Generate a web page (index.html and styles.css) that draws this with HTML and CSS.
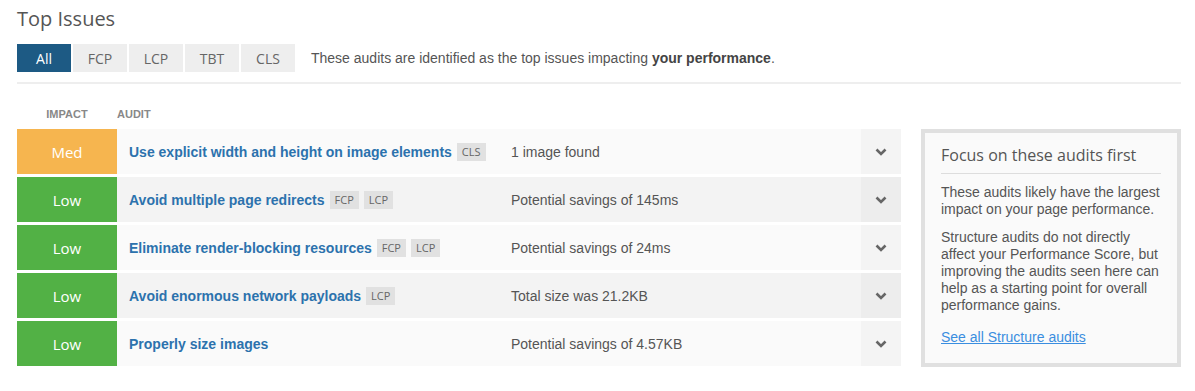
FILE: index.html
```html
<!DOCTYPE html>
<html lang="en">
<head>
    <meta charset="UTF-8">
    <meta name="viewport" content="width=device-width, initial-scale=1.0">
    <title>Top Issues</title>
    <link rel="stylesheet" href="styles.css">
</head>
<body>
    <div class="container">
        <h2 class="title">Top Issues</h2>

        <div class="filter-bar">
            <div class="tabs">
                <button class="tab active">All</button>
                <button class="tab">FCP</button>
                <button class="tab">LCP</button>
                <button class="tab">TBT</button>
                <button class="tab">CLS</button>
            </div>
            <p class="filter-note">These audits are identified as the top issues impacting <strong>your performance</strong>.</p>
        </div>

        <div class="layout">
            <div class="audits">
                <div class="audits-head">
                    <span class="col-impact">Impact</span>
                    <span class="col-audit">Audit</span>
                </div>

                <div class="audit-row">
                    <div class="impact impact-med">Med</div>
                    <div class="audit-name">
                        <a href="#">Use explicit width and height on image elements</a>
                        <span class="tag">CLS</span>
                    </div>
                    <div class="audit-desc">1 image found</div>
                    <div class="toggle"><svg width="12" height="8" viewBox="0 0 12 8"><polyline points="1.5,1.5 6,6 10.5,1.5" fill="none" stroke="#666" stroke-width="2.6"/></svg></div>
                </div>

                <div class="audit-row">
                    <div class="impact impact-low">Low</div>
                    <div class="audit-name">
                        <a href="#">Avoid multiple page redirects</a>
                        <span class="tag">FCP</span>
                        <span class="tag">LCP</span>
                    </div>
                    <div class="audit-desc">Potential savings of 145ms</div>
                    <div class="toggle"><svg width="12" height="8" viewBox="0 0 12 8"><polyline points="1.5,1.5 6,6 10.5,1.5" fill="none" stroke="#666" stroke-width="2.6"/></svg></div>
                </div>

                <div class="audit-row">
                    <div class="impact impact-low">Low</div>
                    <div class="audit-name">
                        <a href="#">Eliminate render-blocking resources</a>
                        <span class="tag">FCP</span>
                        <span class="tag">LCP</span>
                    </div>
                    <div class="audit-desc">Potential savings of 24ms</div>
                    <div class="toggle"><svg width="12" height="8" viewBox="0 0 12 8"><polyline points="1.5,1.5 6,6 10.5,1.5" fill="none" stroke="#666" stroke-width="2.6"/></svg></div>
                </div>

                <div class="audit-row">
                    <div class="impact impact-low">Low</div>
                    <div class="audit-name">
                        <a href="#">Avoid enormous network payloads</a>
                        <span class="tag">LCP</span>
                    </div>
                    <div class="audit-desc">Total size was 21.2KB</div>
                    <div class="toggle"><svg width="12" height="8" viewBox="0 0 12 8"><polyline points="1.5,1.5 6,6 10.5,1.5" fill="none" stroke="#666" stroke-width="2.6"/></svg></div>
                </div>

                <div class="audit-row">
                    <div class="impact impact-low">Low</div>
                    <div class="audit-name">
                        <a href="#">Properly size images</a>
                    </div>
                    <div class="audit-desc">Potential savings of 4.57KB</div>
                    <div class="toggle"><svg width="12" height="8" viewBox="0 0 12 8"><polyline points="1.5,1.5 6,6 10.5,1.5" fill="none" stroke="#666" stroke-width="2.6"/></svg></div>
                </div>
            </div>

            <aside class="focus-box">
                <h3>Focus on these audits first</h3>
                <p>These audits likely have the largest impact on your page performance.</p>
                <p>Structure audits do not directly affect your Performance Score, but improving the audits seen here can help as a starting point for overall performance gains.</p>
                <a href="#" class="focus-link">See all Structure audits</a>
            </aside>
        </div>
    </div>
</body>
</html>
```

FILE: styles.css
```css
* {
    box-sizing: border-box;
    margin: 0;
    padding: 0;
}

body {
    background-color: #fff;
    font-family: 'Liberation Sans', Arial, sans-serif;
    color: #555;
}

.container {
    padding: 5px 14px 0 17px;
}

.title {
    font-family: 'Open Sans', 'Noto Sans', sans-serif;
    font-weight: 400;
    font-size: 20px;
    line-height: 27px;
    color: #555;
    margin-bottom: 12px;
}

.filter-bar {
    display: flex;
    align-items: center;
    padding-bottom: 10px;
    border-bottom: 2px solid #eee;
}

.tabs {
    display: flex;
    gap: 2px;
}

.tab {
    width: 54px;
    height: 28px;
    border: none;
    background-color: #eee;
    color: #666;
    font-family: 'Open Sans', 'Noto Sans', sans-serif;
    font-size: 14px;
    cursor: pointer;
}

.tab.active {
    background-color: #1d5a84;
    color: #fff;
}

.filter-note {
    margin-left: 16px;
    font-size: 14px;
    color: #555;
}

.filter-note strong {
    color: #444;
}

.layout {
    display: flex;
    align-items: flex-start;
    gap: 20px;
}

.audits {
    width: 884px;
}

.audits-head {
    display: flex;
    height: 45px;
    align-items: center;
    padding-top: 14px;
    font-size: 11px;
    font-weight: 700;
    text-transform: uppercase;
    color: #888;
}

.col-impact {
    width: 100px;
    text-align: center;
}

.audit-row {
    display: flex;
    height: 45px;
    margin-bottom: 3px;
    background-color: #fafafa;
}

.audit-row:nth-child(odd) {
    background-color: #f3f3f3;
}

.impact {
    width: 100px;
    display: flex;
    align-items: center;
    justify-content: center;
    color: #fff;
    font-family: 'Open Sans', 'Noto Sans', sans-serif;
    font-size: 15px;
}

.impact-med {
    background-color: #f6b54f;
}

.impact-low {
    background-color: #52b145;
}

.audit-name {
    width: 382px;
    padding-left: 12px;
    display: flex;
    align-items: center;
    gap: 5px;
}

.audit-name a {
    color: #2c72ad;
    font-weight: 700;
    font-size: 14px;
    text-decoration: none;
}

.tag {
    background-color: #e1e1e1;
    color: #666;
    font-family: 'Open Sans', 'Noto Sans', sans-serif;
    font-size: 11px;
    line-height: 18px;
    padding: 0 5px;
}

.audit-desc {
    flex: 1;
    display: flex;
    align-items: center;
    padding-left: 12px;
    font-size: 14px;
    color: #555;
}

.toggle {
    width: 40px;
    display: flex;
    align-items: center;
    justify-content: center;
    background-color: rgba(0, 0, 0, 0.025);
}

.focus-box {
    width: 260px;
    margin-top: 45px;
    height: 238px;
    border: 4px solid #e0e0e0;
    background-color: #fafafa;
    padding: 12px 16px 0 16px;
    font-size: 14px;
    line-height: 17px;
    color: #555;
}

.focus-box h3 {
    font-family: 'Open Sans', 'Noto Sans', sans-serif;
    font-weight: 400;
    font-size: 16px;
    line-height: 20px;
    color: #555;
    padding-bottom: 8px;
    border-bottom: 1px solid #ddd;
    margin-bottom: 10px;
}

.focus-box p {
    margin-bottom: 11px;
}

.focus-link {
    display: inline-block;
    margin-top: 4px;
    color: #3a8ee0;
}
```
